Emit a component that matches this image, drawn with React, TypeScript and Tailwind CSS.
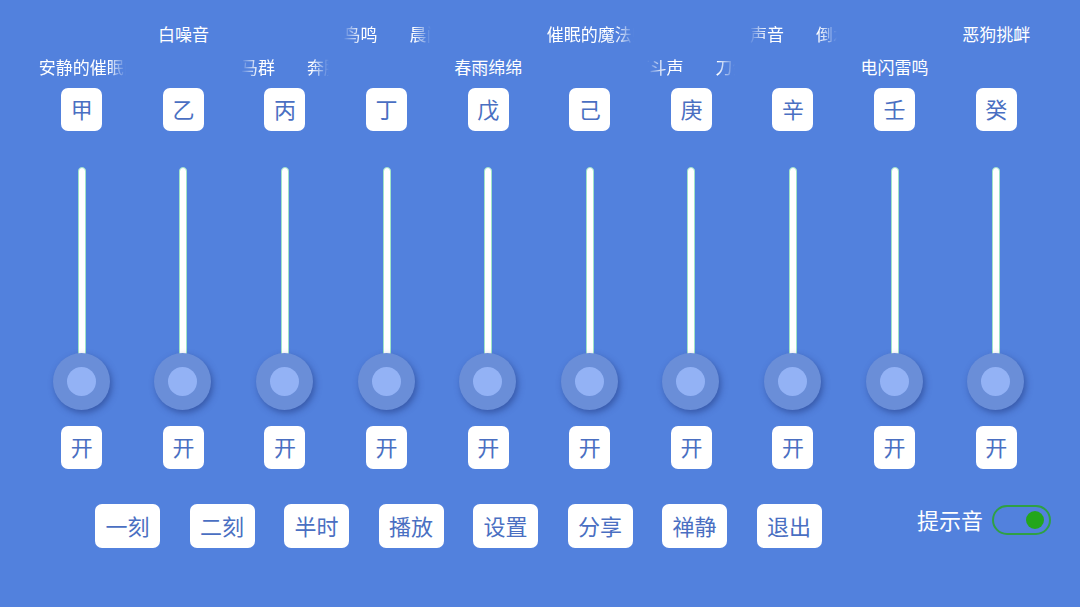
const font = "font-['Noto_Sans_CJK_SC','Noto_Sans',sans-serif]";

type Label = {
  row: "top" | "bottom";
  // plain centered label, or marquee pieces mid-scroll
  text?: string;
  lead?: string;
  tail?: string;
  shift?: string;
  fade?: "right" | "both";
};

const channels: { key: string; label: Label }[] = [
  { key: "甲", label: { row: "bottom", lead: "安静的催眠曲", shift: "ml-[1px]", fade: "right" } },
  { key: "乙", label: { row: "top", text: "白噪音" } },
  { key: "丙", label: { row: "bottom", lead: "的马群", tail: "奔腾的马群", shift: "-ml-[17px]", fade: "both" } },
  { key: "丁", label: { row: "top", lead: "间鸟鸣", tail: "晨间鸟鸣", shift: "-ml-[16px]", fade: "both" } },
  { key: "戊", label: { row: "bottom", text: "春雨绵绵" } },
  { key: "己", label: { row: "top", lead: "催眠的魔法师", shift: "ml-[1px]", fade: "right" } },
  { key: "庚", label: { row: "bottom", lead: "打斗声", tail: "刀剑打斗声", shift: "-ml-[15px]", fade: "both" } },
  { key: "辛", label: { row: "top", lead: "的声音", tail: "倒水的声音", shift: "-ml-[16px]", fade: "both" } },
  { key: "壬", label: { row: "bottom", text: "电闪雷鸣" } },
  { key: "癸", label: { row: "top", text: "恶狗挑衅" } },
];

const actions = ["一刻", "二刻", "半时", "播放", "设置", "分享", "禅静", "退出"];

function ChannelLabel({ label }: { label: Label }) {
  if (label.text) {
    return (
      <div className="flex h-[20px] w-[88px] justify-center whitespace-nowrap text-[17px] leading-[20px] text-white">
        {label.text}
      </div>
    );
  }
  const mask =
    label.fade === "right"
      ? "[mask-image:linear-gradient(to_right,#000_80%,transparent)] [-webkit-mask-image:linear-gradient(to_right,#000_80%,transparent)]"
      : "[mask-image:linear-gradient(to_right,transparent,#000_20%,#000_80%,transparent)] [-webkit-mask-image:linear-gradient(to_right,transparent,#000_20%,#000_80%,transparent)]";
  return (
    <div className={`flex h-[20px] w-[88px] overflow-hidden whitespace-nowrap text-[17px] leading-[20px] text-white ${mask}`}>
      <span className={`shrink-0 ${label.shift}`}>{label.lead}</span>
      {label.tail && <span className="ml-[32px] shrink-0">{label.tail}</span>}
    </div>
  );
}

function Channel({ k, label }: { k: string; label: Label }) {
  return (
    <div className="flex flex-col items-center">
      <div className={`flex h-[53px] flex-col ${label.row === "top" ? "justify-start" : "justify-end"}`}>
        <ChannelLabel label={label} />
      </div>
      <div className="mt-[11px] flex h-[43px] w-[41px] items-center justify-center rounded-[7px] bg-white pb-[3px] text-[22px] leading-none text-[#4a6fc2]">
        {k}
      </div>
      <div className="relative mt-[36px] flex h-[243px] w-[60px] justify-center">
        <div className="h-[200px] w-[8px] rounded-full border border-[#9fe3c8] bg-white" />
        <div className="absolute bottom-0 left-[1px] flex h-[57px] w-[57px] items-center justify-center rounded-full bg-[#6a8ed8] shadow-[2px_3px_6px_rgba(30,50,120,0.5)]">
          <div className="h-[29px] w-[29px] rounded-full bg-[#93b2f5]" />
        </div>
      </div>
      <div className="mt-[16px] flex h-[43px] w-[41px] items-center justify-center rounded-[7px] bg-white pb-[3px] text-[22px] leading-none text-[#4a6fc2]">
        开
      </div>
    </div>
  );
}

export default function App() {
  return (
    <div className={`h-[607px] w-[1080px] overflow-hidden bg-[#5281dd] ${font}`}>
      <div className="grid grid-cols-10 pl-[31px] pr-[33px] pt-[24px]">
        {channels.map((c) => (
          <Channel key={c.key} k={c.key} label={c.label} />
        ))}
      </div>
      <div className="mt-[35px] flex items-start pl-[95px] pr-[29px]">
        <div className="flex gap-[29.5px]">
          {actions.map((a) => (
            <div
              key={a}
              className="flex h-[44px] w-[65px] items-center justify-center rounded-[7px] bg-white pb-[3px] text-[22px] leading-none text-[#4a6fc2]"
            >
              {a}
            </div>
          ))}
        </div>
        <div className="ml-auto flex items-center gap-[9px]">
          <span className="pb-[2px] text-[22px] leading-[30px] text-white">提示音</span>
          <div className="flex h-[30px] w-[59px] items-center justify-end rounded-full border-2 border-[#2fa044] pr-[5px]">
            <div className="h-[18px] w-[18px] rounded-full bg-[#23a61c]" />
          </div>
        </div>
      </div>
    </div>
  );
}
